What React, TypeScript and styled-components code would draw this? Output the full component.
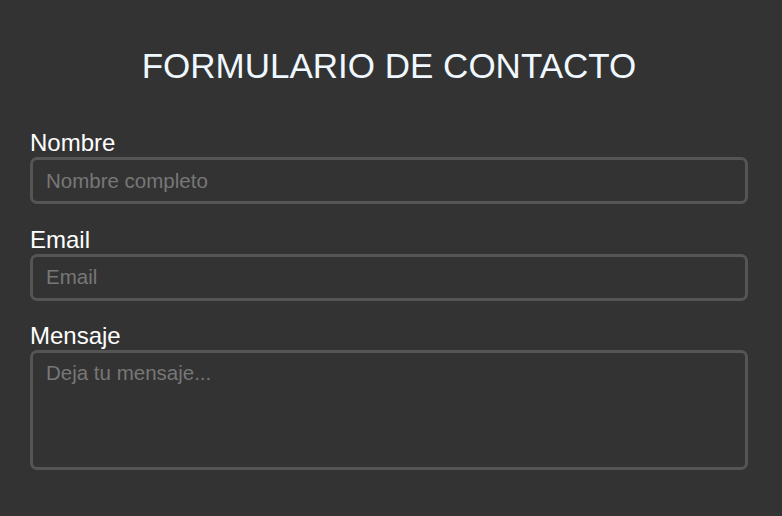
import React from "react";
import styled, { createGlobalStyle } from "styled-components";

const Global = createGlobalStyle`
  html, body { margin: 0; padding: 0; background: #333333; }
  body { font-family: "Liberation Sans", Arial, sans-serif; }
`;

const Page = styled.div`
  min-height: 516px;
  box-sizing: border-box;
  padding: 46px 34px 0 30px;
  background: #333333;
  display: flex;
  flex-direction: column;
`;

const Title = styled.h1`
  margin: 0 0 43px;
  text-align: center;
  font-weight: normal;
  font-size: 35px;
  color: #f0f8ff;
`;

const Form = styled.form`
  display: flex;
  flex-direction: column;
  gap: 21.5px;
`;

const Field = styled.div`
  display: flex;
  flex-direction: column;
`;

const Label = styled.label`
  font-size: 24px;
  color: #ffffff;
  line-height: 28px;
`;

const baseInput = `
  box-sizing: border-box;
  width: 100%;
  background: #333333;
  border: 3px solid #555555;
  border-radius: 7px;
  color: #dddddd;
  font-family: "Liberation Sans", Arial, sans-serif;
  font-size: 20.5px;
  padding: 0 13px;
  outline: none;
  &::placeholder { color: #777777; }
`;

const Input = styled.input`
  ${baseInput}
  height: 47px;
`;

const TextArea = styled.textarea<{ $h: number }>`
  ${baseInput}
  height: ${(p) => p.$h}px;
  padding-top: 8px;
  resize: none;
`;

export default function App() {
  return (
    <>
      <Global />
      <Page>
        <Title>FORMULARIO DE CONTACTO</Title>
        <Form>
          <Field>
            <Label>Nombre</Label>
            <Input placeholder="Nombre completo" />
          </Field>
          <Field>
            <Label>Email</Label>
            <Input placeholder="Email" />
          </Field>
          <Field>
            <Label>Mensaje</Label>
            <TextArea $h={120} placeholder="Deja tu mensaje..." />
          </Field>
        </Form>
      </Page>
    </>
  );
}
